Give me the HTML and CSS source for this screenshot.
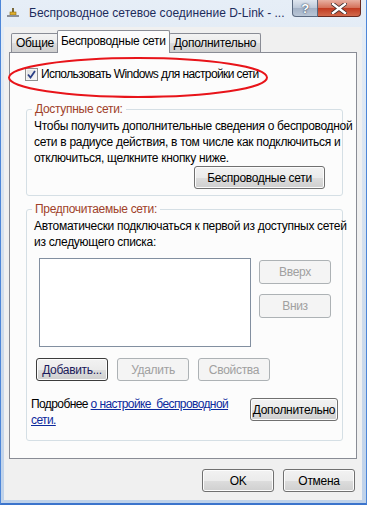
FILE: index.html
```html
<!DOCTYPE html>
<html lang="ru">
<head>
  <meta charset="UTF-8" />
  <meta name="viewport" content="width=device-width, initial-scale=1.0">
  <title>Беспроводное сетевое соединение D-Link</title>
  <link rel="stylesheet" href="styles.css">
</head>
<body>

  <div class="window">
    <div class="title-bar">
      <svg class="app-icon" width="12" height="10" viewBox="0 0 12 10">
        <rect x="5" y="0" width="2" height="5" fill="#7a6a3a"/>
        <rect x="3" y="4" width="6" height="3" fill="#e0b030" stroke="#8a6a10" stroke-width="0.6"/>
        <rect x="0" y="7" width="12" height="2" fill="#8a8f98"/>
      </svg>
      <span class="title">Беспроводное сетевое соединение D-Link - ...</span>
      <div class="caption-btns">
        <div class="cap-btn help">?</div>
        <div class="cap-btn close">
          <svg width="16" height="11" viewBox="0 0 16 11">
            <path d="M2 1 L14 10 M14 1 L2 10" stroke="#3a2a2a" stroke-width="4" stroke-linecap="square"/>
            <path d="M2 1 L14 10 M14 1 L2 10" stroke="#ffffff" stroke-width="2.4" stroke-linecap="square"/>
          </svg>
        </div>
      </div>
    </div>

    <div class="client">
      <div class="tabs">
        <div class="tab">Общие</div>
        <div class="tab active">Беспроводные сети</div>
        <div class="tab">Дополнительно</div>
      </div>

      <div class="tab-page">
        <label class="check-row">
          <span class="checkbox">
            <svg width="9" height="9" viewBox="0 0 9 9">
              <path d="M1 4.5 L3.5 7.5 L8 1" fill="none" stroke="#2a3f86" stroke-width="1.8"/>
            </svg>
          </span>
          Использовать Windows для настройки сети
        </label>

        <fieldset class="group available">
          <legend>Доступные сети:</legend>
          <p class="group-text">Чтобы получить дополнительные сведения о беспроводной<br>сети в радиусе действия, в том числе как подключиться и<br>отключиться, щелкните кнопку ниже.</p>
          <div class="btn-line">
            <button class="btn wide">Беспроводные сети</button>
          </div>
        </fieldset>

        <fieldset class="group preferred">
          <legend>Предпочитаемые сети:</legend>
          <p class="group-text">Автоматически подключаться к первой из доступных сетей<br>из следующего списка:</p>
          <div class="list-area">
            <div class="listbox"></div>
            <div class="order-btns">
              <button class="btn" disabled>Вверх</button>
              <button class="btn" disabled>Вниз</button>
            </div>
          </div>
          <div class="action-btns">
            <button class="btn focused">Добавить...</button>
            <button class="btn" disabled>Удалить</button>
            <button class="btn" disabled>Свойства</button>
          </div>
          <div class="more-line">
            <p class="more-text">Подробнее <a href="#">о настройке&nbsp; беспроводной<br>сети.</a></p>
            <button class="btn more">Дополнительно</button>
          </div>
        </fieldset>
      </div>

      <div class="dialog-btns">
        <button class="btn">OK</button>
        <button class="btn">Отмена</button>
      </div>
    </div>

    <svg class="mark" width="264" height="44" viewBox="0 0 264 44">
      <ellipse cx="131" cy="21.5" rx="129" ry="19.5" fill="none" stroke="#e8141a" stroke-width="2"/>
    </svg>
  </div>

</body>
</html>
```

FILE: styles.css
```css
* {
  box-sizing: border-box;
  font-family: 'Liberation Sans', Arial, sans-serif;
}

body {
  margin: 0;
  background: #fff;
  font-size: 12px;
  letter-spacing: -0.3px;
  color: #000;
}

.window {
  position: relative;
  width: 367px;
  height: 505px;
  display: flex;
  flex-direction: column;
  background: linear-gradient(to bottom, #e6eef7, #cfdcec 60%, #bfd2ea);
  padding: 0 4px 3px 3px;
  border-left: 1px solid #4d86d8;
  border-bottom: 2px solid #3b74cc;
  border-right: 1px solid #4d86d8;
  overflow: hidden;
}

.title-bar {
  height: 27px;
  display: flex;
  align-items: flex-start;
  padding-left: 3px;
}

.app-icon {
  margin-top: 8px;
}

.title {
  margin: 6px 0 0 10px;
  color: #1d2c5c;
  font-size: 12px;
  letter-spacing: 0;
  white-space: nowrap;
}

.caption-btns {
  margin-left: auto;
  display: flex;
  margin-right: 1px;
}

.cap-btn {
  height: 17px;
  display: flex;
  align-items: center;
  justify-content: center;
  border: 1px solid #5b6a80;
  border-top: none;
}

.help {
  width: 26px;
  border-radius: 0 0 0 4px;
  background: linear-gradient(to bottom, #dfe6ef, #bcc8d8 50%, #a3b1c5 51%, #b9c6d6);
  color: #fff;
  font-weight: bold;
  font-size: 13px;
  text-shadow: 0 0 2px #3a4a60, 0 0 1px #3a4a60;
}

.close {
  width: 43px;
  border-left: none;
  border-color: #6a2a20;
  border-radius: 0 0 4px 0;
  background: linear-gradient(to bottom, #e8b0a2, #d46f58 50%, #c1391f 51%, #d26a4c);
}

.client {
  flex: 1;
  background: #f0f0f0;
  display: flex;
  flex-direction: column;
  padding: 3px 5px 0 5px;
}

.tabs {
  display: flex;
  align-items: flex-end;
  height: 22px;
  padding-left: 2px;
}

.tab {
  height: 19px;
  padding: 0 4px;
  line-height: 18px;
  border: 1px solid #898c95;
  border-bottom: none;
  border-radius: 2px 2px 0 0;
  background: linear-gradient(to bottom, #f3f3f3, #ebebeb 50%, #dddddd 51%, #cfcfcf);
  margin-right: -1px;
}

.tab.active {
  position: relative;
  height: 23px;
  padding: 0 3px;
  margin: 0 -1px -1px -1px;
  line-height: 20px;
  background: #fcfcfc;
  z-index: 1;
}

.tab-page {
  height: 407px;
  border: 1px solid #898c95;
  background: #fcfcfc;
  padding: 13px 14px 0 15px;
}

.check-row {
  display: flex;
  align-items: center;
  height: 16px;
  gap: 3px;
  letter-spacing: -0.6px;
  white-space: nowrap;
}

.checkbox {
  width: 13px;
  height: 13px;
  border: 1px solid #8e8f8f;
  background: linear-gradient(135deg, #dcdcdc, #fbfbfb);
  display: flex;
  align-items: center;
  justify-content: center;
  box-shadow: inset 0 0 0 1px #f4f4f4;
}

.group {
  margin: 19px 0 0 1px;
  padding: 0 0 0 7px;
  width: 317px;
  min-width: 0;
  border: 1px solid #d5dfe5;
  border-radius: 3px;
}

.group legend {
  padding: 0 3px;
  margin-left: -2px;
  line-height: 16px;
  color: #a0412a;
}

.available {
  height: 95px;
}

.preferred {
  margin-top: 5px;
  height: 240px;
}

.group-text {
  margin: 1px 0 0;
  line-height: 16px;
  white-space: nowrap;
}

.btn-line {
  display: flex;
  justify-content: flex-end;
  padding-right: 17px;
  margin-top: 0;
}

.btn {
  width: 72px;
  height: 23px;
  padding: 0;
  font-size: 12px;
  letter-spacing: -0.3px;
  color: #000;
  border: 1px solid #707070;
  border-radius: 3px;
  background: linear-gradient(to bottom, #f2f2f2, #ebebeb 50%, #dddddd 51%, #cfcfcf);
  box-shadow: inset 0 0 0 1px #fcfcfc;
}

.btn:disabled {
  color: #a0a0a0;
  border-color: #adb2b5;
  background: #f4f4f4;
  box-shadow: none;
}

.btn.wide {
  width: 131px;
}

.btn.focused {
  border-color: #3c3c3c;
  color: #1a1a5a;
}

.list-area {
  display: flex;
  gap: 8px;
  margin-top: 8px;
  padding-left: 5px;
}

.listbox {
  width: 212px;
  height: 89px;
  border: 1px solid #828fa0;
  background: #fff;
}

.order-btns {
  display: flex;
  flex-direction: column;
  gap: 10px;
  margin-top: 2px;
}

.order-btns .btn {
  height: 24px;
}

.action-btns {
  display: flex;
  gap: 9px;
  margin-top: 11px;
  padding-left: 2px;
}

.more-line {
  display: flex;
  align-items: flex-start;
  margin-top: 15px;
}

.more-text {
  margin: 0 0 0 -3px;
  line-height: 16px;
  letter-spacing: -0.6px;
  white-space: nowrap;
}

.more-text a {
  color: #0c2a9c;
}

.btn.more {
  width: 88px;
  margin: 2px 4px 0 auto;
}

.dialog-btns {
  display: flex;
  justify-content: flex-end;
  gap: 9px;
  margin-top: 10px;
  padding-right: 2px;
}

.mark {
  position: absolute;
  left: 6px;
  top: 56px;
}
```
